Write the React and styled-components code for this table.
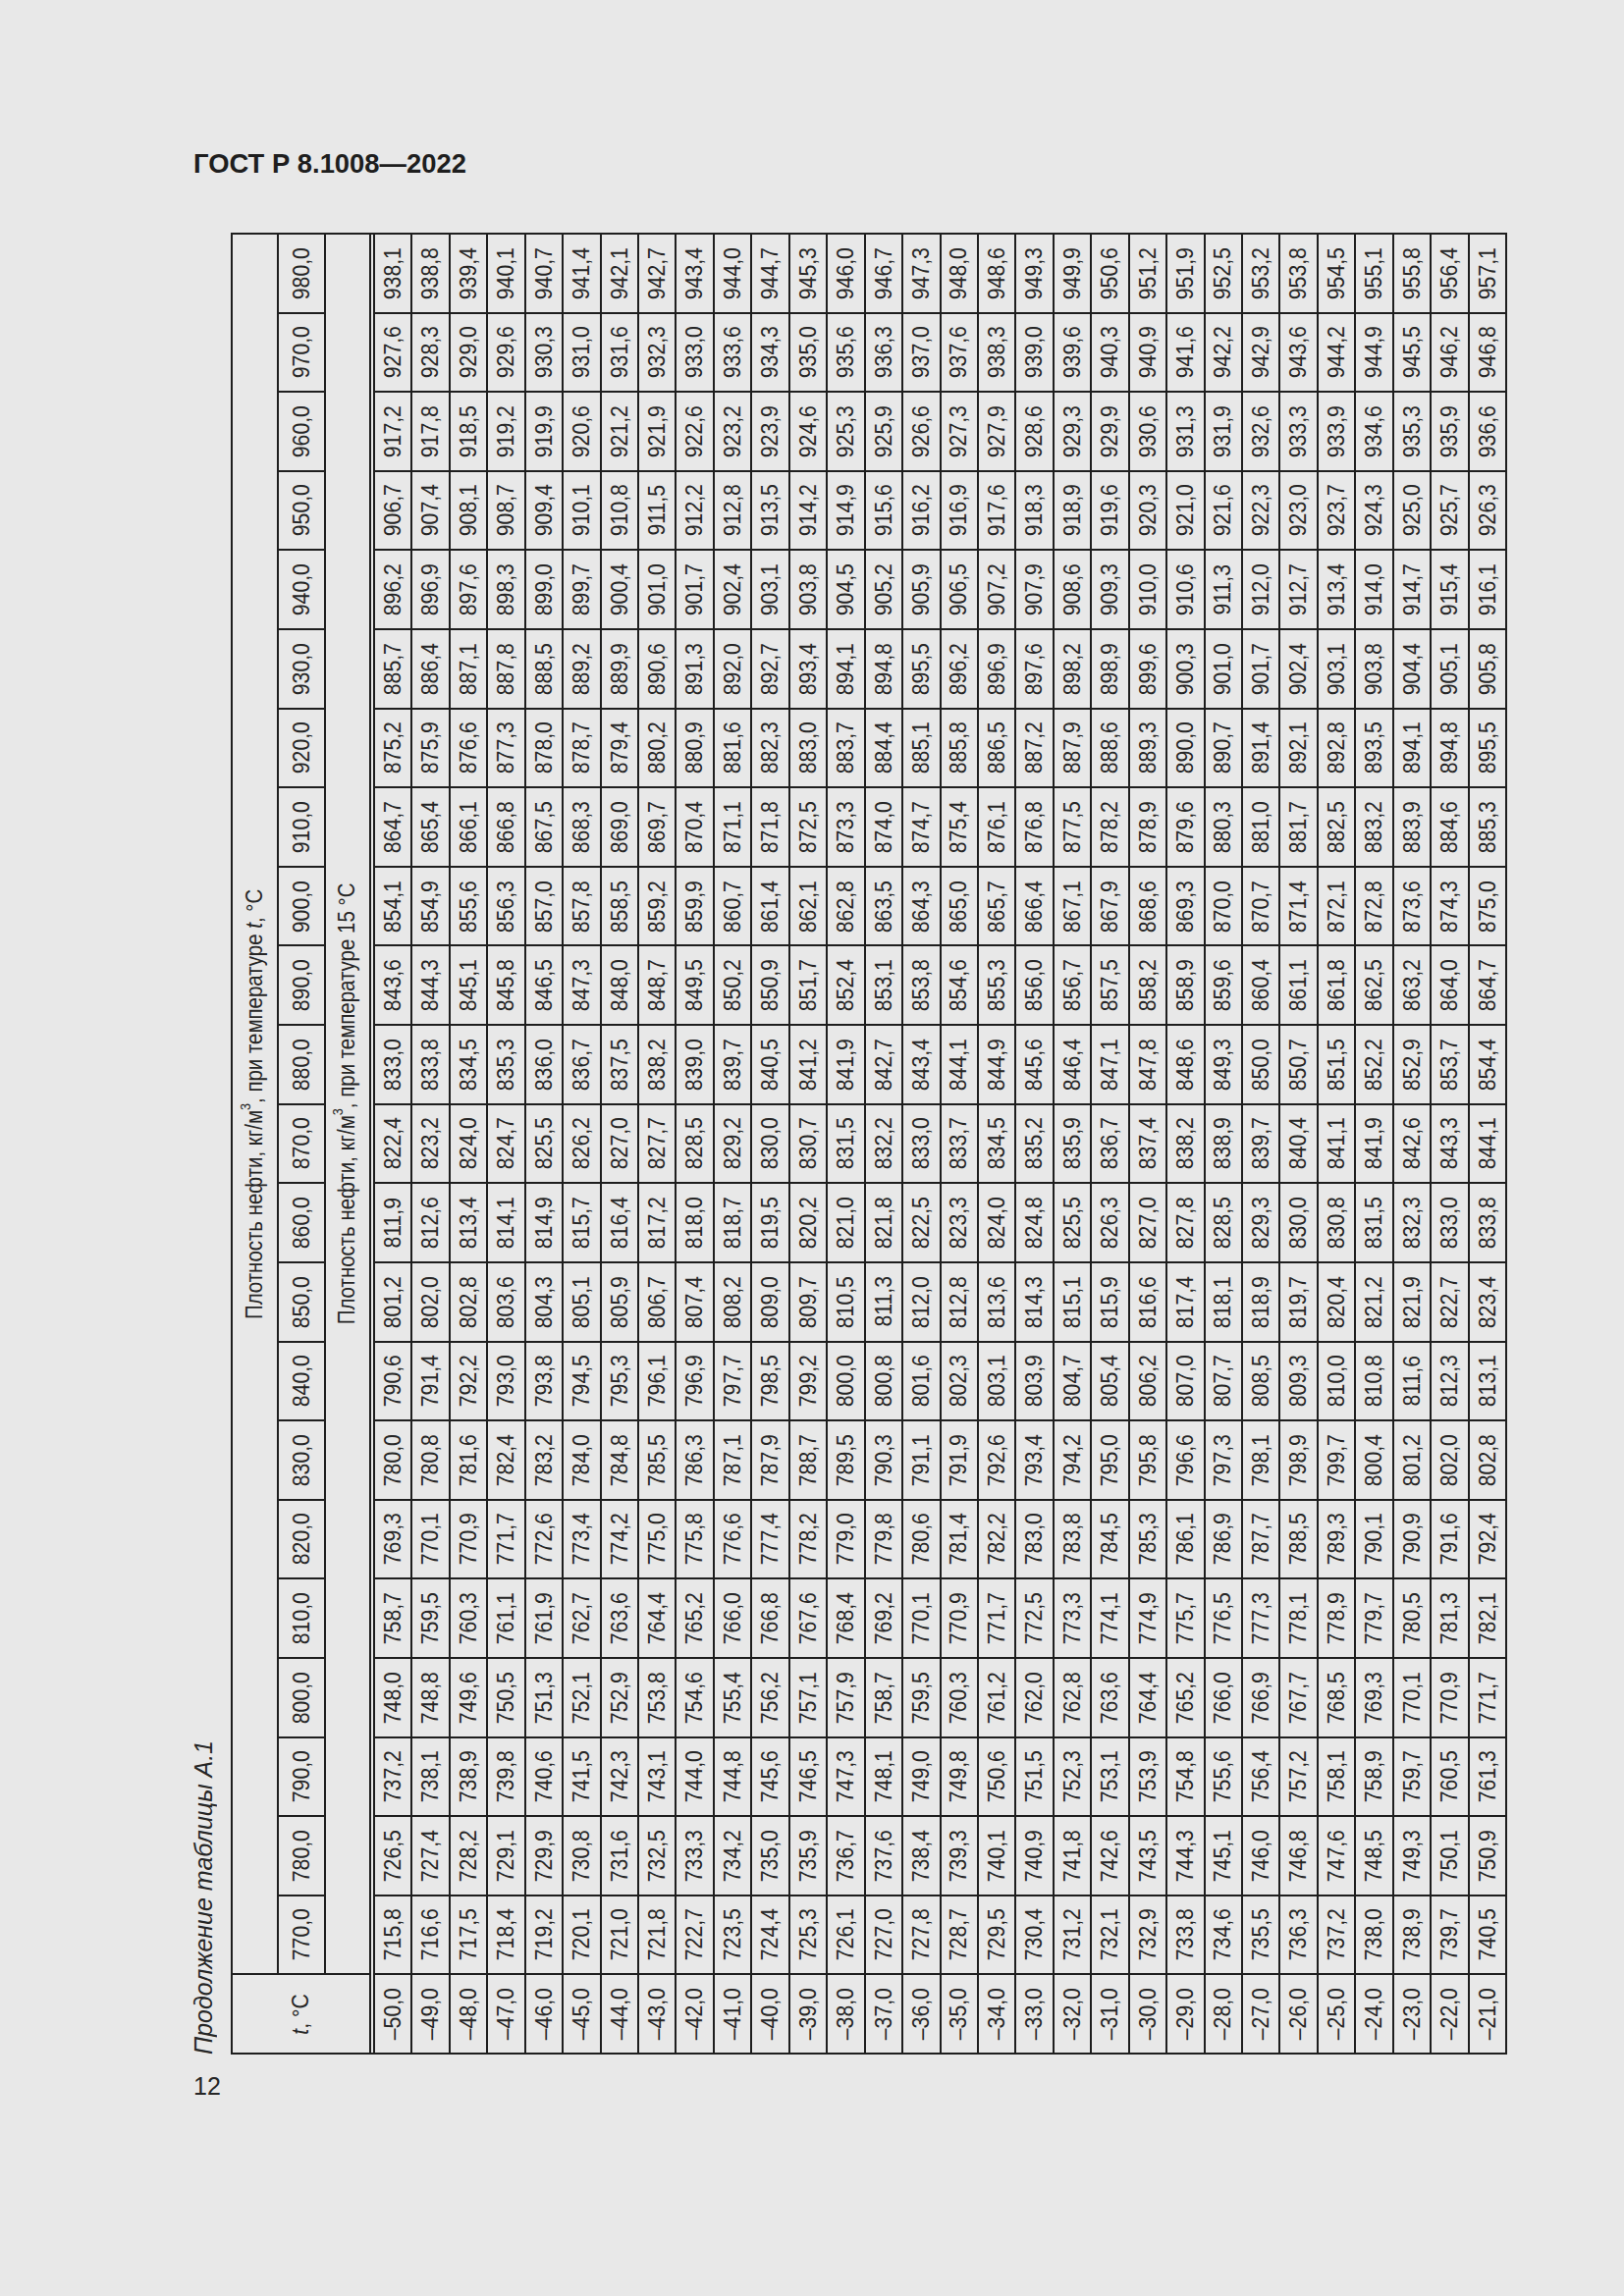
import React from 'react'
import styled, { createGlobalStyle } from 'styled-components'

const GlobalStyle = createGlobalStyle`
  html, body {
    margin: 0;
    background: #e8e8e8;
  }
  body {
    font-family: "Liberation Sans", Arial, sans-serif;
    color: #262626;
  }
`

const densities = [980, 970, 960, 950, 940, 930, 920, 910, 900, 890, 880, 870, 860, 850, 840, 830, 820, 810, 800, 790, 780, 770]

const temps = []
for (let t = -50; t <= -21; t++) temps.push(t)

// one line per density, values for t = -50 ... -21
const values = `
938,1 938,8 939,4 940,1 940,7 941,4 942,1 942,7 943,4 944,0 944,7 945,3 946,0 946,7 947,3 948,0 948,6 949,3 949,9 950,6 951,2 951,9 952,5 953,2 953,8 954,5 955,1 955,8 956,4 957,1
927,6 928,3 929,0 929,6 930,3 931,0 931,6 932,3 933,0 933,6 934,3 935,0 935,6 936,3 937,0 937,6 938,3 939,0 939,6 940,3 940,9 941,6 942,2 942,9 943,6 944,2 944,9 945,5 946,2 946,8
917,2 917,8 918,5 919,2 919,9 920,6 921,2 921,9 922,6 923,2 923,9 924,6 925,3 925,9 926,6 927,3 927,9 928,6 929,3 929,9 930,6 931,3 931,9 932,6 933,3 933,9 934,6 935,3 935,9 936,6
906,7 907,4 908,1 908,7 909,4 910,1 910,8 911,5 912,2 912,8 913,5 914,2 914,9 915,6 916,2 916,9 917,6 918,3 918,9 919,6 920,3 921,0 921,6 922,3 923,0 923,7 924,3 925,0 925,7 926,3
896,2 896,9 897,6 898,3 899,0 899,7 900,4 901,0 901,7 902,4 903,1 903,8 904,5 905,2 905,9 906,5 907,2 907,9 908,6 909,3 910,0 910,6 911,3 912,0 912,7 913,4 914,0 914,7 915,4 916,1
885,7 886,4 887,1 887,8 888,5 889,2 889,9 890,6 891,3 892,0 892,7 893,4 894,1 894,8 895,5 896,2 896,9 897,6 898,2 898,9 899,6 900,3 901,0 901,7 902,4 903,1 903,8 904,4 905,1 905,8
875,2 875,9 876,6 877,3 878,0 878,7 879,4 880,2 880,9 881,6 882,3 883,0 883,7 884,4 885,1 885,8 886,5 887,2 887,9 888,6 889,3 890,0 890,7 891,4 892,1 892,8 893,5 894,1 894,8 895,5
864,7 865,4 866,1 866,8 867,5 868,3 869,0 869,7 870,4 871,1 871,8 872,5 873,3 874,0 874,7 875,4 876,1 876,8 877,5 878,2 878,9 879,6 880,3 881,0 881,7 882,5 883,2 883,9 884,6 885,3
854,1 854,9 855,6 856,3 857,0 857,8 858,5 859,2 859,9 860,7 861,4 862,1 862,8 863,5 864,3 865,0 865,7 866,4 867,1 867,9 868,6 869,3 870,0 870,7 871,4 872,1 872,8 873,6 874,3 875,0
843,6 844,3 845,1 845,8 846,5 847,3 848,0 848,7 849,5 850,2 850,9 851,7 852,4 853,1 853,8 854,6 855,3 856,0 856,7 857,5 858,2 858,9 859,6 860,4 861,1 861,8 862,5 863,2 864,0 864,7
833,0 833,8 834,5 835,3 836,0 836,7 837,5 838,2 839,0 839,7 840,5 841,2 841,9 842,7 843,4 844,1 844,9 845,6 846,4 847,1 847,8 848,6 849,3 850,0 850,7 851,5 852,2 852,9 853,7 854,4
822,4 823,2 824,0 824,7 825,5 826,2 827,0 827,7 828,5 829,2 830,0 830,7 831,5 832,2 833,0 833,7 834,5 835,2 835,9 836,7 837,4 838,2 838,9 839,7 840,4 841,1 841,9 842,6 843,3 844,1
811,9 812,6 813,4 814,1 814,9 815,7 816,4 817,2 818,0 818,7 819,5 820,2 821,0 821,8 822,5 823,3 824,0 824,8 825,5 826,3 827,0 827,8 828,5 829,3 830,0 830,8 831,5 832,3 833,0 833,8
801,2 802,0 802,8 803,6 804,3 805,1 805,9 806,7 807,4 808,2 809,0 809,7 810,5 811,3 812,0 812,8 813,6 814,3 815,1 815,9 816,6 817,4 818,1 818,9 819,7 820,4 821,2 821,9 822,7 823,4
790,6 791,4 792,2 793,0 793,8 794,5 795,3 796,1 796,9 797,7 798,5 799,2 800,0 800,8 801,6 802,3 803,1 803,9 804,7 805,4 806,2 807,0 807,7 808,5 809,3 810,0 810,8 811,6 812,3 813,1
780,0 780,8 781,6 782,4 783,2 784,0 784,8 785,5 786,3 787,1 787,9 788,7 789,5 790,3 791,1 791,9 792,6 793,4 794,2 795,0 795,8 796,6 797,3 798,1 798,9 799,7 800,4 801,2 802,0 802,8
769,3 770,1 770,9 771,7 772,6 773,4 774,2 775,0 775,8 776,6 777,4 778,2 779,0 779,8 780,6 781,4 782,2 783,0 783,8 784,5 785,3 786,1 786,9 787,7 788,5 789,3 790,1 790,9 791,6 792,4
758,7 759,5 760,3 761,1 761,9 762,7 763,6 764,4 765,2 766,0 766,8 767,6 768,4 769,2 770,1 770,9 771,7 772,5 773,3 774,1 774,9 775,7 776,5 777,3 778,1 778,9 779,7 780,5 781,3 782,1
748,0 748,8 749,6 750,5 751,3 752,1 752,9 753,8 754,6 755,4 756,2 757,1 757,9 758,7 759,5 760,3 761,2 762,0 762,8 763,6 764,4 765,2 766,0 766,9 767,7 768,5 769,3 770,1 770,9 771,7
737,2 738,1 738,9 739,8 740,6 741,5 742,3 743,1 744,0 744,8 745,6 746,5 747,3 748,1 749,0 749,8 750,6 751,5 752,3 753,1 753,9 754,8 755,6 756,4 757,2 758,1 758,9 759,7 760,5 761,3
726,5 727,4 728,2 729,1 729,9 730,8 731,6 732,5 733,3 734,2 735,0 735,9 736,7 737,6 738,4 739,3 740,1 740,9 741,8 742,6 743,5 744,3 745,1 746,0 746,8 747,6 748,5 749,3 750,1 750,9
715,8 716,6 717,5 718,4 719,2 720,1 721,0 721,8 722,7 723,5 724,4 725,3 726,1 727,0 727,8 728,7 729,5 730,4 731,2 732,1 732,9 733,8 734,6 735,5 736,3 737,2 738,0 738,9 739,7 740,5
`.trim().split('\n').map(line => line.trim().split(' '))

const fmt = n => (n < 0 ? '–' : '') + Math.abs(n).toFixed(1).replace('.', ',')

const Page = styled.div`
  width: 1654px;
  min-height: 2339px;
  box-sizing: border-box;
  padding: 151px 0 0 197px;
`

const DocCode = styled.div`
  font-size: 27.4px;
  font-weight: bold;
  line-height: 31px;
  color: #1e1e1e;
`

const Body = styled.div`
  display: flex;
  align-items: flex-end;
  gap: 18px;
  margin-top: 55px;
`

const Caption = styled.div`
  writing-mode: vertical-rl;
  transform: rotate(180deg);
  font-style: italic;
  font-size: 25px;
  line-height: 20px;
  white-space: nowrap;
`

const Grid = styled.div`
  display: grid;
  grid-template-columns: 45px 46px 44px 2px repeat(30, 1fr);
  grid-template-rows: repeat(23, 1fr);
  gap: 2px;
  padding: 2px;
  width: 1300px;
  height: 1856px;
  box-sizing: border-box;
  background: #1e1e1e;
`

const Cell = styled.div`
  grid-column: ${p => p.$col};
  grid-row: ${p => p.$row};
  background: #e8e8e8;
  display: flex;
  align-items: center;
  justify-content: center;
  overflow: hidden;
`

const VText = styled.span`
  writing-mode: vertical-rl;
  transform: rotate(180deg) scaleY(${p => p.$squeeze || 0.865});
  font-size: ${p => p.$size || 24.5}px;
  line-height: 1;
  white-space: nowrap;
`

const Sup = styled.sup`
  font-size: 0.62em;
  line-height: 0;
  vertical-align: super;
`

const Var = styled.i`
  font-style: italic;
`

const PageNum = styled.div`
  font-size: 25px;
  line-height: 29px;
  margin-top: 18px;
`

export default function App () {
  return (<Page>
    <GlobalStyle />
    <DocCode>ГОСТ Р 8.1008—2022</DocCode>
    <Body>
      <Caption>Продолжение таблицы А.1</Caption>
      <Grid>
        <Cell $col='1' $row='1 / 23'>
          <VText $size={23.5} $squeeze={0.87}>
            Плотность нефти, кг/м<Sup>3</Sup>, при температуре <Var>t</Var>, °C
          </VText>
        </Cell>
        {densities.map((d, i) => (
          <Cell key={d} $col='2' $row={i + 1}>
            <VText>{fmt(d)}</VText>
          </Cell>
        ))}
        <Cell $col='3' $row='1 / 23'>
          <VText $size={23.5} $squeeze={0.87}>
            Плотность нефти, кг/м<Sup>3</Sup>, при температуре 15 °C
          </VText>
        </Cell>
        <Cell $col='1 / 4' $row='23'>
          <VText><Var>t</Var>, °C</VText>
        </Cell>
        <Cell $col='4' $row='1 / 24' />
        {temps.map((t, j) => (
          <React.Fragment key={t}>
            {values.map((row, i) => (
              <Cell key={i} $col={j + 5} $row={i + 1}>
                <VText>{row[j]}</VText>
              </Cell>
            ))}
            <Cell $col={j + 5} $row='23'>
              <VText>{fmt(t)}</VText>
            </Cell>
          </React.Fragment>
        ))}
      </Grid>
    </Body>
    <PageNum>12</PageNum>
  </Page>)
}
